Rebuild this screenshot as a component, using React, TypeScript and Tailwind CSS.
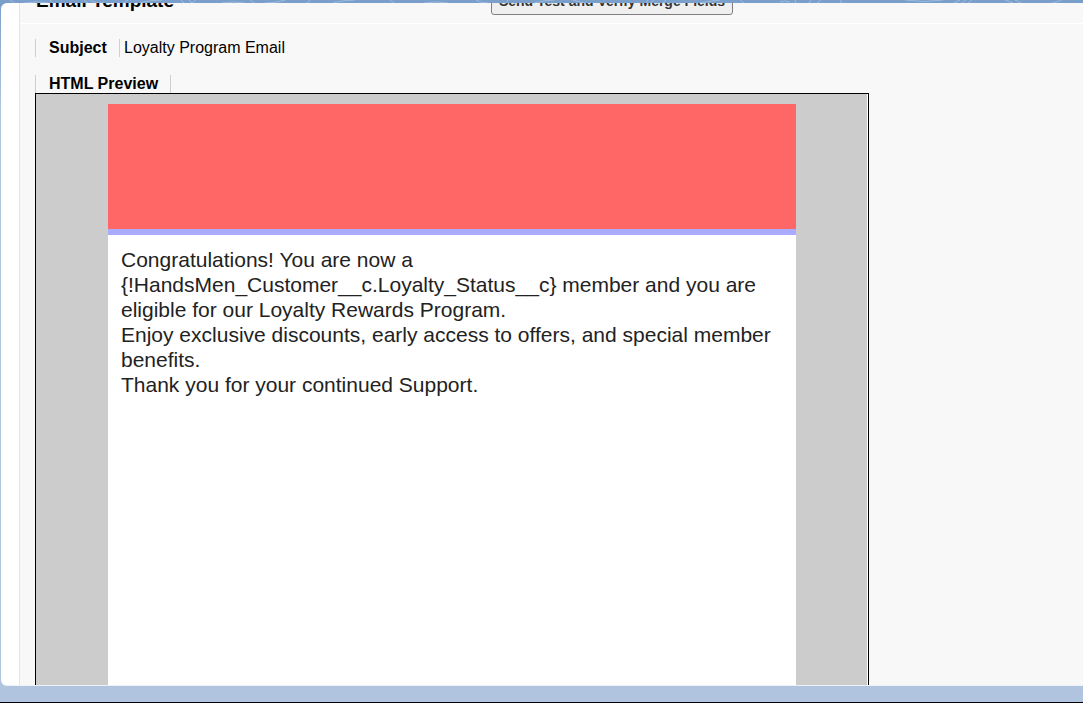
function TopBand() {
  return (
    <svg
      className="block h-[3px] w-full shrink-0 bg-[#7a9fca]"
      viewBox="0 0 1083 3"
      preserveAspectRatio="xMinYMin slice"
      fill="none"
      stroke="#9dbbdc"
      strokeWidth="1"
      aria-hidden="true"
    >
      <path d="M10 0l4 3M24 3q12-2 24 0M50 0l3 3M84 0l4 3M90 0q4 3 14 3M128 0l-4 3M140 3q10-3 22-3M181 0l3 3M189 0l3 3M196 0l-4 3M222 3q12-2 22 0M250 0l4 3M265 3q12 0 20-3M310 0l-3 3M333 3q10-3 22-3M390 0l4 3M424 3q12-2 24 0M476 0q4 3 12 3M508 0l-2 3M535 3q10-3 20-3M573 0q6 2 12 3M648 0l-2 3M654 0l-3 3M666 0l-3 3M700 3q10-2 20-3M740 0l4 3M780 2q4-2 10 0M795 0l1 3M811 0l-2 3M821 0l-4 3M841 0v3M905 0q20 3 38 0M960 0l-6 3M966 0l-4 3M972 0l-4 3M1005 0l8 3M1015 0l6 3M1052 3q6-1 9-3" />
    </svg>
  );
}

export default function App() {
  return (
    <div className="flex h-screen flex-col overflow-hidden border-b border-black bg-[#b0c4df] font-['Liberation_Sans',Arial,sans-serif] text-base leading-[18px] text-black">
      <TopBand />
      <div className="flex min-h-0 flex-1 flex-col bg-linear-to-b from-[#7a9fca] to-[#b0c4df] to-15% pl-px">
        <main className="flex min-h-0 flex-1 overflow-hidden rounded-l-md border-b border-[#eef2f8] bg-white pl-[18px]">
          <div className="flex min-w-0 flex-1 flex-col border-l border-[#e5e5e5] bg-[#f8f8f8]">
            <header className="flex h-[21px] shrink-0 items-end gap-[317px] overflow-hidden border-b border-white pb-2 pl-4">
              <h1 className="pb-1 text-[19px] leading-5 font-bold whitespace-nowrap">Email Template</h1>
              <button
                type="button"
                className="h-6 w-[242px] shrink-0 rounded-[3px] border border-[#7f7f7f] bg-[#efefef] pb-1 text-sm leading-[18px] font-bold whitespace-nowrap text-[#333]"
              >
                Send Test and Verify Merge Fields
              </button>
            </header>

            <dl className="mt-[15px] flex shrink-0 pl-[15px]">
              <dt className="w-[84px] border-l border-[#cfcfcf] pl-[13px] font-bold">Subject</dt>
              <dd className="border-l border-[#cfcfcf] pl-1">Loyalty Program Email</dd>
            </dl>

            <section className="mt-[18px] flex min-h-0 flex-1 flex-col pl-[15px]">
              <h2 className="w-[136px] shrink-0 border-x border-[#cfcfcf] pl-[13px] font-bold">HTML Preview</h2>
              <div className="flex min-h-0 w-full max-w-[834px] flex-1 flex-col border border-b-0 border-black bg-white pr-px">
                <div className="flex min-h-0 flex-1 flex-col bg-[#cccccc] px-[71px] pt-[10px] pl-[72px]">
                  <div className="h-[125px] shrink-0 bg-[#ff6666]" />
                  <div className="h-[6px] shrink-0 bg-[#aaaaff]" />
                  <article className="min-h-0 flex-1 bg-white px-[13px] py-3 text-[21px] leading-[25px] text-[#222]">
                    <p>
                      Congratulations! You are now a {'{!HandsMen_Customer__c.Loyalty_Status__c}'} member and you are
                      eligible for our Loyalty Rewards Program.
                    </p>
                    <p>Enjoy exclusive discounts, early access to offers, and special member benefits.</p>
                    <p>Thank you for your continued Support.</p>
                  </article>
                </div>
              </div>
            </section>
          </div>
        </main>
      </div>
      <div className="h-4 shrink-0 bg-[#b0c4df]" />
    </div>
  );
}
